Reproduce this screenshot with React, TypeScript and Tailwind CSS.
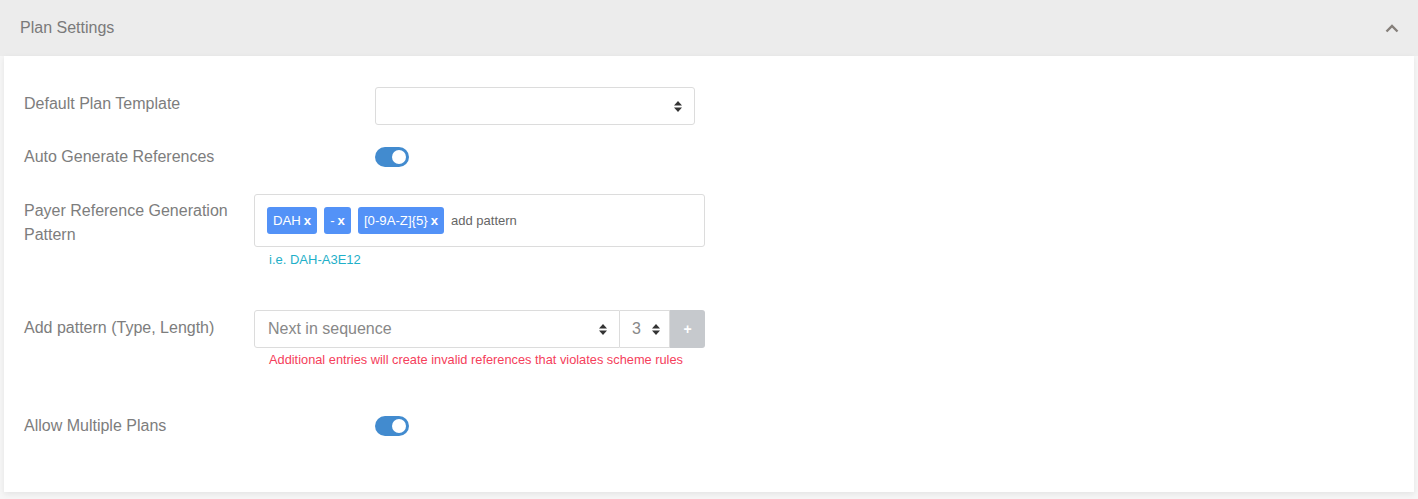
import React from "react";

const font = "font-['Liberation_Sans',Arial,Helvetica,sans-serif]";

// Small up/down caret pair used by the native-looking selects
const Carets = () => (
  <svg width="8" height="11" viewBox="0 0 8 11" className="shrink-0">
    <polygon points="4,0 8,4.5 0,4.5" fill="#333" />
    <polygon points="0,6.5 8,6.5 4,11" fill="#333" />
  </svg>
);

const Toggle = ({ on = true }: { on?: boolean }) => (
  <div
    className={`relative h-[20px] w-[34px] rounded-full ${on ? "bg-[#428bcf]" : "bg-gray-300"}`}
  >
    <span
      className={`absolute top-[3px] h-[14px] w-[14px] rounded-full bg-white ${on ? "left-[17px]" : "left-[3px]"}`}
    />
  </div>
);

const Tag = ({ text }: { text: string }) => (
  <span className="flex h-[27px] items-center rounded-[3px] bg-[#5392f7] px-[6px] text-[13.2px] text-white">
    {text}
    <b className="ml-[3px] font-bold">x</b>
  </span>
);

const labelCls = "w-[250px] shrink-0 pl-[20px] text-[16px] leading-[24px] text-[#7d7d7d]";

export default function App() {
  const tags = ["DAH", "-", "[0-9A-Z]{5}"];

  return (
    <div className={`min-h-screen bg-[#f6f6f6] ${font}`}>
      {/* accordion header */}
      <div className="flex h-[56px] items-center justify-between bg-[#ececec] pl-[20px] pr-[19px]">
        <span className="text-[16px] text-[#7a7a7a]">Plan Settings</span>
        <svg width="14" height="9" viewBox="0 0 14 9">
          <polyline
            points="1.5,7.5 7,2 12.5,7.5"
            fill="none"
            stroke="#857f7a"
            strokeWidth="2.4"
          />
        </svg>
      </div>

      {/* body */}
      <div className="mx-[4px] bg-white pb-[56px] pt-[31px] shadow-[0_2px_6px_rgba(0,0,0,0.08)]">
        <div className="flex h-[38px] items-center">
          <div className={`${labelCls} pb-[5px]`}>Default Plan Template</div>
          <div className="ml-[121px] flex h-[38px] w-[320px] items-center justify-end rounded-[3px] border border-[#dcdcdc] pr-[12px]">
            <Carets />
          </div>
        </div>

        <div className="mt-[22px] flex h-[20px] items-center">
          <div className={labelCls}>Auto Generate References</div>
          <div className="ml-[121px]">
            <Toggle />
          </div>
        </div>

        <div className="mt-[27px] flex">
          <div className={`${labelCls} pt-[5px]`}>
            Payer Reference Generation Pattern
          </div>
          <div>
            <div className="flex h-[53px] w-[451px] items-start gap-[7px] rounded-[3px] border border-[#dcdcdc] px-[12px] pt-[12px]">
              {tags.map((t) => (
                <Tag key={t} text={t} />
              ))}
              <span className="flex h-[27px] items-center text-[13px] text-[#666]">
                add pattern
              </span>
            </div>
            <div className="mt-[5px] pl-[15px] text-[13px] leading-[16px] text-[#1fb0c9]">
              i.e. DAH-A3E12
            </div>
          </div>
        </div>

        <div className="mt-[42px] flex">
          <div className={`${labelCls} pt-[6px]`}>Add pattern (Type, Length)</div>
          <div>
            <div className="flex h-[38px] w-[451px]">
              <div className="flex flex-1 items-center justify-between rounded-l-[3px] border border-[#dcdcdc] pl-[13px] pr-[12px] text-[16px] text-[#888]">
                Next in sequence
                <Carets />
              </div>
              <div className="flex w-[50px] items-center justify-between border border-l-0 border-[#dcdcdc] pl-[12px] pr-[9px] text-[16px] text-[#888]">
                3
                <Carets />
              </div>
              <div className="flex w-[35px] items-center justify-center rounded-r-[3px] bg-[#c6c9cd] text-[14px] font-bold text-white">
                +
              </div>
            </div>
            <div className="mt-[4px] pl-[15px] text-[12.8px] leading-[16px] text-[#f5405b]">
              Additional entries will create invalid references that violates scheme rules
            </div>
          </div>
        </div>

        <div className="mt-[48px] flex h-[20px] items-center">
          <div className={labelCls}>Allow Multiple Plans</div>
          <div className="ml-[121px]">
            <Toggle />
          </div>
        </div>
      </div>
    </div>
  );
}
